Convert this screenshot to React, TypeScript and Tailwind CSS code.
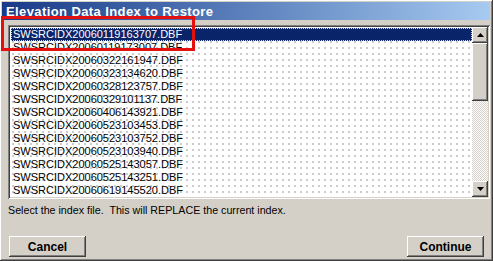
import React from "react";

const files = [
  "SWSRCIDX20060119163707.DBF",
  "SWSRCIDX20060119173007.DBF",
  "SWSRCIDX20060322161947.DBF",
  "SWSRCIDX20060323134620.DBF",
  "SWSRCIDX20060328123757.DBF",
  "SWSRCIDX20060329101137.DBF",
  "SWSRCIDX20060406143921.DBF",
  "SWSRCIDX20060523103453.DBF",
  "SWSRCIDX20060523103752.DBF",
  "SWSRCIDX20060523103940.DBF",
  "SWSRCIDX20060525143057.DBF",
  "SWSRCIDX20060525143251.DBF",
  "SWSRCIDX20060619145520.DBF",
];

const raised =
  "shadow-[inset_-1px_-1px_#404040,inset_1px_1px_#ffffff,inset_-2px_-2px_#808080,inset_2px_2px_#d4d0c8]";

function Arrow({ up }: { up?: boolean }) {
  return (
    <svg width="7" height="4" viewBox="0 0 7 4">
      {up ? <path d="M3.5 0 L7 4 L0 4 Z" fill="#000" /> : <path d="M0 0 L7 0 L3.5 4 Z" fill="#000" />}
    </svg>
  );
}

function ScrollButton({ up }: { up?: boolean }) {
  return (
    <div className={`flex h-[16px] w-[16px] items-center justify-center bg-[#d4d0c8] ${raised}`}>
      <Arrow up={up} />
    </div>
  );
}

function WinButton({ label }: { label: string }) {
  return (
    <button
      className={`flex h-[21px] w-[77px] items-center justify-center bg-[#d4d0c8] text-[12px] font-bold text-black ${raised}`}
    >
      {label}
    </button>
  );
}

export default function App() {
  return (
    <div
      className={`relative flex h-[261px] w-[493px] flex-col bg-[#d4d0c8] p-[2px] pr-[3px] font-['Liberation_Sans',Arial,sans-serif] ${raised}`}
    >
      {/* Title bar */}
      <div className="flex h-[18px] items-center bg-gradient-to-r from-[#1a3a88] to-[#a6caf0] pl-[4px]">
        <span className="text-[13px] font-bold leading-none tracking-[0.4px] text-white">
          Elevation Data Index to Restore
        </span>
      </div>

      {/* List box */}
      <div className="ml-[6px] mt-[5px] flex h-[174px] bg-white shadow-[inset_1px_1px_#808080,inset_-1px_-1px_#ffffff,inset_2px_2px_#404040,inset_-2px_-2px_#d4d0c8] p-[2px]">
        <div className="flex-1 bg-[radial-gradient(#c8c8c8_0.7px,transparent_0.8px)] bg-[length:6px_6px] pl-[1px] pt-[1px]">
          {files.map((f, i) => (
            <div
              key={f}
              className={
                i === 0
                  ? "flex h-[13px] items-center border border-dotted border-[#e8e070] bg-[#0a246a] pl-[1px] text-[11px] leading-none text-white"
                  : "flex h-[13px] items-center pl-[2px] text-[11px] leading-none text-black"
              }
            >
              {f}
            </div>
          ))}
        </div>
        <div className="flex w-[16px] flex-col bg-[repeating-conic-gradient(#d4d0c8_0_25%,#ffffff_0_50%)] bg-[length:2px_2px]">
          <ScrollButton up />
          <div className={`h-[58px] bg-[#d4d0c8] ${raised}`} />
          <div className="flex-1" />
          <ScrollButton />
        </div>
      </div>

      <p className="ml-[6px] mt-[4px] text-[10.7px] leading-[14px] text-black">
        Select the index file.&nbsp; This will REPLACE the current index.
      </p>

      <div className="ml-[7px] mr-[6px] mt-[19px] flex justify-between">
        <WinButton label="Cancel" />
        <WinButton label="Continue" />
      </div>

      {/* annotation rectangle */}
      <div className="absolute left-[1px] top-[16px] h-[35px] w-[194px] border-[3px] border-[#e41010]" />
    </div>
  );
}
